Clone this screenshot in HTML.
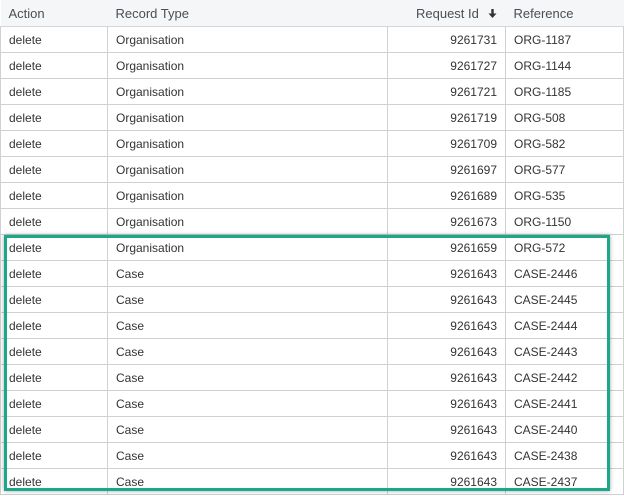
<!DOCTYPE html>
<html><head><meta charset="utf-8"><style>
body{margin:0;width:624px;height:496px;overflow:hidden;background:#fff;font-family:"Liberation Sans",sans-serif;position:relative}
table{border-collapse:collapse;position:absolute;left:0;top:0;width:623px;table-layout:fixed}
th{height:26px;background:#f5f6f7;color:#4a4f55;font-weight:normal;font-size:13px;text-align:left;padding:0 8px;border-bottom:1px solid #d6d6d6}
td{height:25px;font-size:12px;color:#333;padding:0 8px;border:1px solid #d0d0d0;border-top:none}
td.n{text-align:right}
th.n{text-align:right}
.box{position:absolute;left:4px;top:235px;width:600px;height:250px;border:3px solid #1aa88a;box-shadow:0 0 4px rgba(0,0,0,.35)}
</style></head><body>
<table>
<colgroup><col style="width:107px"><col style="width:280px"><col style="width:118px"><col style="width:118px"></colgroup>
<tr><th>Action</th><th>Record Type</th><th class="n">Request Id <svg width="11" height="11" viewBox="0 0 11 11" style="margin-left:4px;vertical-align:-1px"><path d="M5.5 1v5" stroke="#333" stroke-width="2.4" fill="none"/><path d="M1.5 5.5h8L5.5 10z" fill="#333"/></svg></th><th>Reference</th></tr>
<tr><td>delete</td><td>Organisation</td><td class="n">9261731</td><td>ORG-1187</td></tr>
<tr><td>delete</td><td>Organisation</td><td class="n">9261727</td><td>ORG-1144</td></tr>
<tr><td>delete</td><td>Organisation</td><td class="n">9261721</td><td>ORG-1185</td></tr>
<tr><td>delete</td><td>Organisation</td><td class="n">9261719</td><td>ORG-508</td></tr>
<tr><td>delete</td><td>Organisation</td><td class="n">9261709</td><td>ORG-582</td></tr>
<tr><td>delete</td><td>Organisation</td><td class="n">9261697</td><td>ORG-577</td></tr>
<tr><td>delete</td><td>Organisation</td><td class="n">9261689</td><td>ORG-535</td></tr>
<tr><td>delete</td><td>Organisation</td><td class="n">9261673</td><td>ORG-1150</td></tr>
<tr><td>delete</td><td>Organisation</td><td class="n">9261659</td><td>ORG-572</td></tr>
<tr><td>delete</td><td>Case</td><td class="n">9261643</td><td>CASE-2446</td></tr>
<tr><td>delete</td><td>Case</td><td class="n">9261643</td><td>CASE-2445</td></tr>
<tr><td>delete</td><td>Case</td><td class="n">9261643</td><td>CASE-2444</td></tr>
<tr><td>delete</td><td>Case</td><td class="n">9261643</td><td>CASE-2443</td></tr>
<tr><td>delete</td><td>Case</td><td class="n">9261643</td><td>CASE-2442</td></tr>
<tr><td>delete</td><td>Case</td><td class="n">9261643</td><td>CASE-2441</td></tr>
<tr><td>delete</td><td>Case</td><td class="n">9261643</td><td>CASE-2440</td></tr>
<tr><td>delete</td><td>Case</td><td class="n">9261643</td><td>CASE-2438</td></tr>
<tr><td>delete</td><td>Case</td><td class="n">9261643</td><td>CASE-2437</td></tr>
</table>
<div class="box"></div>
</body></html>
